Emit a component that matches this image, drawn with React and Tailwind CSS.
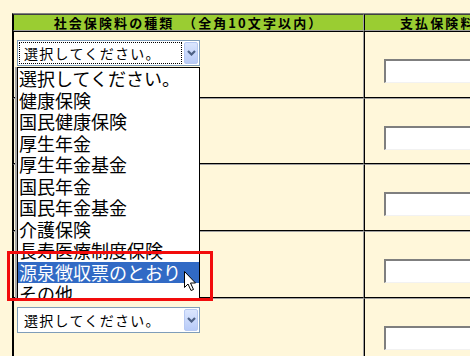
const items = [
  '選択してください。',
  '健康保険',
  '国民健康保険',
  '厚生年金',
  '厚生年金基金',
  '国民年金',
  '国民年金基金',
  '介護保険',
  '長寿医療制度保険',
  '源泉徴収票のとおり',
  'その他',
]

function Chevron() {
  return (
    <svg width="9" height="6" viewBox="0 0 9 6">
      <polyline points="1,1 4.5,4.5 8,1" fill="none" stroke="#4d6185" strokeWidth="2.2" />
    </svg>
  )
}

function Select({ focused }) {
  return (
    <div className="flex h-[26px] w-[183px] border border-[#7f9db9] bg-white p-[1px]">
      <div
        className={
          'flex w-[163px] items-center border pl-[4px] text-[14px] leading-[15px] tracking-[1.3px] text-black ' +
          (focused ? 'border-dotted border-black' : 'border-transparent')
        }
      >
        選択してください。
      </div>
      <div className="ml-[2px] flex w-[14px] items-center justify-center rounded-[2px] border border-[#b7c9f3] bg-gradient-to-b from-[#dbe6fe] to-[#b8cbf8]">
        <Chevron />
      </div>
    </div>
  )
}

function Row({ first, children, height }) {
  return (
    <>
      <div
        className={
          'border-b border-l border-r border-t border-b-black border-l-black border-r-[#a0a0a0] pl-[3px] pt-[8px] ' +
          (first ? 'border-t-black' : 'border-t-[#a0a0a0]') +
          ' ' +
          height
        }
      >
        {children}
      </div>
      <div
        className={
          'border-b border-l border-t border-b-black border-l-black pl-[19px] pt-[27px] ' +
          (first ? 'border-t-black' : 'border-t-[#a0a0a0]') +
          ' ' +
          height
        }
      >
        <input
          type="text"
          readOnly
          className="block h-[24px] w-[120px] border-b border-l-2 border-r border-t-2 border-b-[#f2f2f2] border-l-[#7f7f7f] border-r-[#f2f2f2] border-t-[#7f7f7f] bg-white outline-none"
        />
      </div>
    </>
  )
}

export default function App() {
  return (
    <div className="relative h-[356px] w-[470px] overflow-hidden bg-[#fff7da] font-['Noto_Sans_CJK_JP',sans-serif]">
      <div className="ml-[12px] pt-[13px]">
        <div className="grid w-[499px] grid-cols-[351px_146px] border-l border-t border-l-black border-t-[#808080]">
          <div className="h-[17px] border-b border-l border-r border-t border-b-[#a0a0a0] border-l-black border-r-[#a0a0a0] border-t-[#404040] bg-[#9acd32] text-center text-[13px] font-bold leading-[15px] tracking-[2.1px] text-black">
            社会保険料の種類　（全角10文字以内）
          </div>
          <div className="h-[17px] border-b border-l border-t border-b-[#a0a0a0] border-l-black border-t-[#404040] bg-[#9acd32] pl-[35px] text-[13px] font-bold leading-[15px] tracking-[2.1px] text-black">
            支払保険料
          </div>
          <Row first height="h-[67px]">
            <Select focused />
          </Row>
          <Row height="h-[66px]" />
          <Row height="h-[67px]" />
          <Row height="h-[67px]" />
          <Row height="h-[67px]">
            <Select />
          </Row>
        </div>
      </div>

      {/* open dropdown list */}
      <div className="absolute left-[15px] top-[67px] h-[234px] w-[2px] bg-[#a8a8a8]" />
      <div className="absolute left-[17px] top-[67px] h-[234px] w-[183px] overflow-hidden border border-black bg-white">
        {items.map((t, i) => (
          <div
            key={t}
            className={
              'h-[21.5px] whitespace-nowrap pl-[1px] text-[18px] leading-[21.5px] ' +
              (i === 9 ? 'bg-[#316ac5] text-white' : 'text-black')
            }
          >
            {t}
          </div>
        ))}
      </div>

      {/* red highlight box */}
      <div className="absolute left-[7px] top-[251px] h-[50px] w-[206px] border-[3px] border-[#f20c0c]" />

      {/* mouse cursor */}
      <svg className="absolute left-[183px] top-[270px]" width="14" height="22" viewBox="0 0 14 22">
        <path
          d="M1.5 1.5 L1.5 17.5 L5 14 L8 20.5 L10.5 19.5 L7.5 13 L12.5 13 Z"
          fill="#fff"
          stroke="#000"
          strokeWidth="1"
          strokeLinejoin="miter"
        />
      </svg>
    </div>
  )
}
